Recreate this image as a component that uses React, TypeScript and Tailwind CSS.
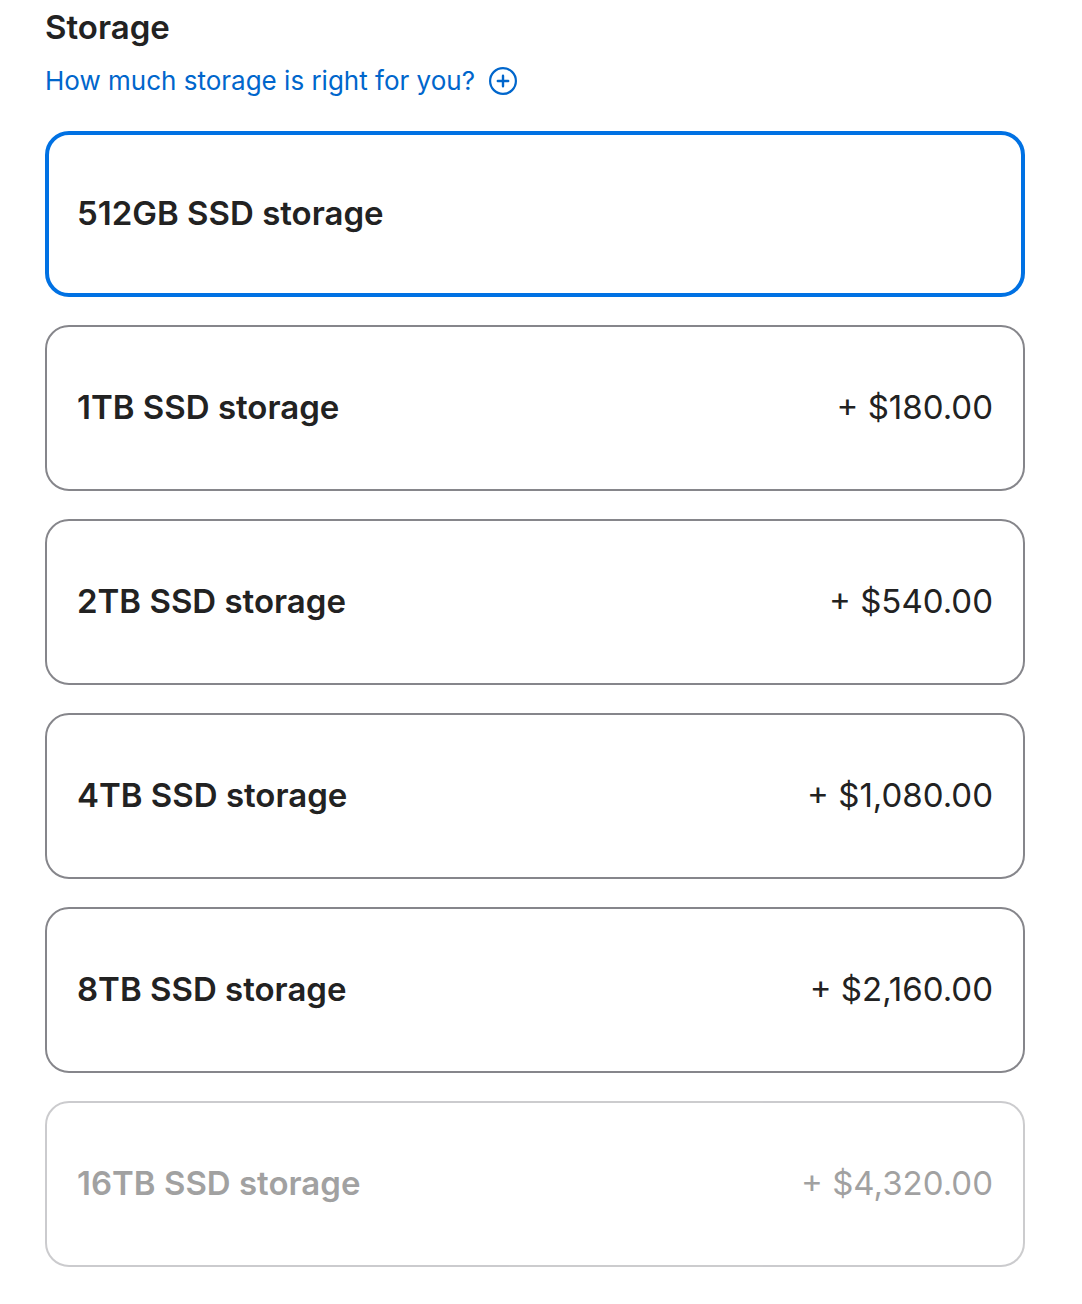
import { useState } from 'react'

const options = [
  { id: '512gb', label: '512GB SSD storage', price: '' },
  { id: '1tb', label: '1TB SSD storage', price: '+ $180.00' },
  { id: '2tb', label: '2TB SSD storage', price: '+ $540.00' },
  { id: '4tb', label: '4TB SSD storage', price: '+ $1,080.00' },
  { id: '8tb', label: '8TB SSD storage', price: '+ $2,160.00' },
  { id: '16tb', label: '16TB SSD storage', price: '+ $4,320.00', disabled: true },
]

export default function App() {
  const [selected, setSelected] = useState('512gb')

  return (
    <main className="min-h-screen bg-white pl-[45px] pr-[57px] pt-2 pb-9 font-['Inter',sans-serif] text-[#222222]">
      <h2 id="storage-heading" className="text-[33px] leading-[38px] font-semibold">Storage</h2>
      <a href="#storage-help" className="mt-[18px] flex w-fit items-center gap-[13px] text-[26px] leading-[34px] text-[#0066cc]">
        How much storage is right for you?
        <svg viewBox="0 0 30 30" className="size-[30px]" fill="none" stroke="currentColor" strokeWidth="2.2" aria-hidden="true">
          <circle cx="15" cy="15" r="12.9" />
          <path d="M15 9.8v10.4M9.8 15h10.4" strokeWidth="2.4" strokeLinecap="round" />
        </svg>
      </a>
      <div role="radiogroup" aria-labelledby="storage-heading" className="mt-[33px] flex flex-col gap-7">
        {options.map((option) => (
          <label
            key={option.id}
            className="relative flex h-[166px] cursor-pointer items-center justify-between rounded-3xl border-2 border-[#86868b] px-[30px] pb-0.5 text-[33px] leading-[38px] has-checked:border-4 has-checked:border-[#0071e3] has-checked:px-7 has-disabled:cursor-default has-disabled:opacity-42"
          >
            <input
              type="radio"
              name="storage"
              value={option.id}
              checked={selected === option.id}
              disabled={option.disabled}
              onChange={() => setSelected(option.id)}
              className="sr-only"
            />
            <span className="font-semibold">{option.label}</span>
            <span>{option.price}</span>
          </label>
        ))}
      </div>
    </main>
  )
}
